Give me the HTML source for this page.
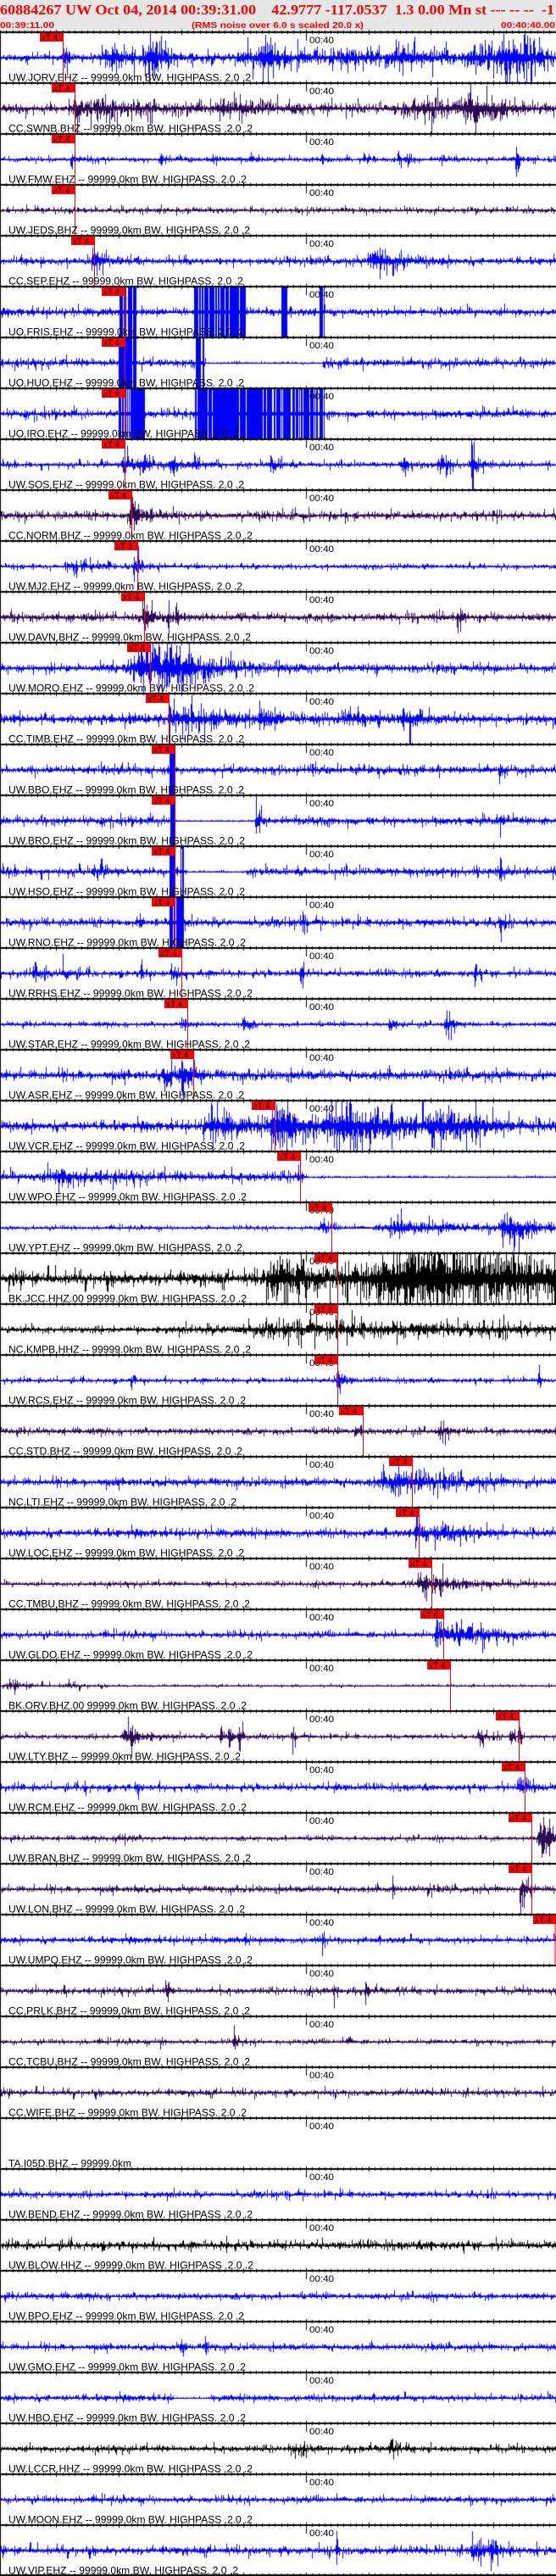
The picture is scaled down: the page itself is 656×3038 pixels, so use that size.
<!DOCTYPE html>
<html><head><meta charset="utf-8">
<style>
html,body{margin:0;padding:0;background:#fff;}
#w{position:relative;width:656px;height:3038px;overflow:hidden;background:#fff;}
canvas,svg{position:absolute;left:0;top:0;}
.l{font-family:"Liberation Sans",sans-serif;font-size:12px;fill:#000;}
.t{font-family:"Liberation Sans",sans-serif;font-size:11px;fill:#000;}
.x{font-family:"Liberation Sans",sans-serif;font-size:10px;fill:#000;}
.r{fill:#ff0000;}
.m{stroke:#ff0000;stroke-width:1;}
</style></head><body>
<div id="w">
<canvas id="c" width="656" height="3038"></canvas>
<svg width="656" height="3038" xmlns="http://www.w3.org/2000/svg">
<text x="0" y="17" textLength="654" lengthAdjust="spacingAndGlyphs" xml:space="preserve" style="white-space:pre;font-family:'Liberation Serif',serif;font-weight:bold;font-size:17px;fill:#ff0000">60884267 UW Oct 04, 2014 00:39:31.00    42.9777 -117.0537  1.3 0.00 Mn st --- -- --  -1</text>
<text x="0" y="33" textLength="64" lengthAdjust="spacingAndGlyphs" style="font-family:'Liberation Sans',sans-serif;font-weight:bold;font-size:10px;fill:#ff0000">00:39:11.00</text>
<text x="226" y="33" textLength="203" lengthAdjust="spacingAndGlyphs" style="font-family:'Liberation Sans',sans-serif;font-weight:bold;font-size:10px;fill:#ff0000">(RMS noise over 6.0 s scaled 20.0 x)</text>
<text x="591" y="33" textLength="64" lengthAdjust="spacingAndGlyphs" style="font-family:'Liberation Sans',sans-serif;font-weight:bold;font-size:10px;fill:#ff0000">00:40:40.00</text>

<g transform="translate(0,38)"><text class="t" x="365" y="13" textLength="29" lengthAdjust="spacingAndGlyphs">00:40</text><line class="m" x1="74.5" y1="0" x2="74.5" y2="60"/><rect class="r" x="47" y="1" width="28" height="10"/><text class="x" x="49" y="9.5">xT 4</text><text class="l" x="10" y="57.5" textLength="286" lengthAdjust="spacingAndGlyphs">UW.JORV.EHZ -- 99999.0km BW. HIGHPASS. 2.0 .2</text></g>
<g transform="translate(0,98)"><text class="t" x="365" y="13" textLength="29" lengthAdjust="spacingAndGlyphs">00:40</text><line class="m" x1="88.5" y1="0" x2="88.5" y2="60"/><rect class="r" x="61" y="1" width="28" height="10"/><text class="x" x="63" y="9.5">xT 4</text><text class="l" x="10" y="57.5" textLength="288" lengthAdjust="spacingAndGlyphs">CC.SWNB.BHZ -- 99999.0km BW. HIGHPASS .2.0 .2</text></g>
<g transform="translate(0,158)"><text class="t" x="365" y="13" textLength="29" lengthAdjust="spacingAndGlyphs">00:40</text><line class="m" x1="88.5" y1="0" x2="88.5" y2="60"/><rect class="r" x="61" y="1" width="28" height="10"/><text class="x" x="63" y="9.5">xT 4</text><text class="l" x="10" y="57.5" textLength="281" lengthAdjust="spacingAndGlyphs">UW.FMW.EHZ -- 99999.0km BW. HIGHPASS. 2.0 .2</text></g>
<g transform="translate(0,218)"><text class="t" x="365" y="13" textLength="29" lengthAdjust="spacingAndGlyphs">00:40</text><line class="m" x1="88.5" y1="0" x2="88.5" y2="60"/><rect class="r" x="61" y="1" width="28" height="10"/><text class="x" x="63" y="9.5">xT 4</text><text class="l" x="10" y="57.5" textLength="285" lengthAdjust="spacingAndGlyphs">UW.JEDS.BHZ -- 99999.0km BW. HIGHPASS. 2.0 .2</text></g>
<g transform="translate(0,278)"><text class="t" x="365" y="13" textLength="29" lengthAdjust="spacingAndGlyphs">00:40</text><line class="m" x1="111.5" y1="0" x2="111.5" y2="60"/><rect class="r" x="84" y="1" width="28" height="10"/><text class="x" x="86" y="9.5">xT 4</text><text class="l" x="10" y="57.5" textLength="277" lengthAdjust="spacingAndGlyphs">CC.SEP.EHZ -- 99999.0km BW. HIGHPASS. 2.0 .2</text></g>
<g transform="translate(0,338)"><text class="t" x="365" y="13" textLength="29" lengthAdjust="spacingAndGlyphs">00:40</text><line class="m" x1="147.5" y1="0" x2="147.5" y2="60"/><rect class="r" x="120" y="1" width="28" height="10"/><text class="x" x="122" y="9.5">xT 4</text><text class="l" x="10" y="57.5" textLength="278" lengthAdjust="spacingAndGlyphs">UO.FRIS.EHZ -- 99999.0km BW. HIGHPASS. 2.0 .2</text></g>
<g transform="translate(0,398)"><text class="t" x="365" y="13" textLength="29" lengthAdjust="spacingAndGlyphs">00:40</text><line class="m" x1="147.5" y1="0" x2="147.5" y2="60"/><rect class="r" x="120" y="1" width="28" height="10"/><text class="x" x="122" y="9.5">xT 4</text><text class="l" x="10" y="57.5" textLength="278" lengthAdjust="spacingAndGlyphs">UO.HUO.EHZ -- 99999.0km BW. HIGHPASS. 2.0 .2</text></g>
<g transform="translate(0,458)"><text class="t" x="365" y="13" textLength="29" lengthAdjust="spacingAndGlyphs">00:40</text><line class="m" x1="147.5" y1="0" x2="147.5" y2="60"/><rect class="r" x="120" y="1" width="28" height="10"/><text class="x" x="122" y="9.5">xT 4</text><text class="l" x="10" y="57.5" textLength="272" lengthAdjust="spacingAndGlyphs">UO.IRO.EHZ -- 99999.0km BW. HIGHPASS. 2.0 .2</text></g>
<g transform="translate(0,518)"><text class="t" x="365" y="13" textLength="29" lengthAdjust="spacingAndGlyphs">00:40</text><line class="m" x1="147.5" y1="0" x2="147.5" y2="60"/><rect class="r" x="120" y="1" width="28" height="10"/><text class="x" x="122" y="9.5">xT 4</text><text class="l" x="10" y="57.5" textLength="278" lengthAdjust="spacingAndGlyphs">UW.SOS.EHZ -- 99999.0km BW. HIGHPASS. 2.0 .2</text></g>
<g transform="translate(0,578)"><text class="t" x="365" y="13" textLength="29" lengthAdjust="spacingAndGlyphs">00:40</text><line class="m" x1="155.5" y1="0" x2="155.5" y2="60"/><rect class="r" x="128" y="1" width="28" height="10"/><text class="x" x="130" y="9.5">xT 4</text><text class="l" x="10" y="57.5" textLength="288" lengthAdjust="spacingAndGlyphs">CC.NORM.BHZ -- 99999.0km BW. HIGHPASS .2.0 .2</text></g>
<g transform="translate(0,638)"><text class="t" x="365" y="13" textLength="29" lengthAdjust="spacingAndGlyphs">00:40</text><line class="m" x1="162.5" y1="0" x2="162.5" y2="60"/><rect class="r" x="135" y="1" width="28" height="10"/><text class="x" x="137" y="9.5">xT 4</text><text class="l" x="10" y="57.5" textLength="276" lengthAdjust="spacingAndGlyphs">UW.MJ2.EHZ -- 99999.0km BW. HIGHPASS. 2.0 .2</text></g>
<g transform="translate(0,698)"><text class="t" x="365" y="13" textLength="29" lengthAdjust="spacingAndGlyphs">00:40</text><line class="m" x1="170.5" y1="0" x2="170.5" y2="60"/><rect class="r" x="143" y="1" width="28" height="10"/><text class="x" x="145" y="9.5">xT 4</text><text class="l" x="10" y="57.5" textLength="286" lengthAdjust="spacingAndGlyphs">UW.DAVN.BHZ -- 99999.0km BW. HIGHPASS. 2.0 .2</text></g>
<g transform="translate(0,758)"><text class="t" x="365" y="13" textLength="29" lengthAdjust="spacingAndGlyphs">00:40</text><line class="m" x1="177.5" y1="0" x2="177.5" y2="60"/><rect class="r" x="150" y="1" width="28" height="10"/><text class="x" x="152" y="9.5">xT 4</text><text class="l" x="10" y="57.5" textLength="290" lengthAdjust="spacingAndGlyphs">UW.MORO.EHZ -- 99999.0km BW. HIGHPASS. 2.0 .2</text></g>
<g transform="translate(0,818)"><text class="t" x="365" y="13" textLength="29" lengthAdjust="spacingAndGlyphs">00:40</text><line class="m" x1="199.5" y1="0" x2="199.5" y2="60"/><rect class="r" x="172" y="1" width="28" height="10"/><text class="x" x="174" y="9.5">xT 4</text><text class="l" x="10" y="57.5" textLength="278" lengthAdjust="spacingAndGlyphs">CC.TIMB.EHZ -- 99999.0km BW. HIGHPASS. 2.0 .2</text></g>
<g transform="translate(0,878)"><text class="t" x="365" y="13" textLength="29" lengthAdjust="spacingAndGlyphs">00:40</text><line class="m" x1="206.5" y1="0" x2="206.5" y2="60"/><rect class="r" x="179" y="1" width="28" height="10"/><text class="x" x="181" y="9.5">xT 4</text><text class="l" x="10" y="57.5" textLength="278" lengthAdjust="spacingAndGlyphs">UW.BBO.EHZ -- 99999.0km BW. HIGHPASS. 2.0 .2</text></g>
<g transform="translate(0,938)"><text class="t" x="365" y="13" textLength="29" lengthAdjust="spacingAndGlyphs">00:40</text><line class="m" x1="206.5" y1="0" x2="206.5" y2="60"/><rect class="r" x="179" y="1" width="28" height="10"/><text class="x" x="181" y="9.5">xT 4</text><text class="l" x="10" y="57.5" textLength="279" lengthAdjust="spacingAndGlyphs">UW.BRO.EHZ -- 99999.0km BW. HIGHPASS. 2.0 .2</text></g>
<g transform="translate(0,998)"><text class="t" x="365" y="13" textLength="29" lengthAdjust="spacingAndGlyphs">00:40</text><line class="m" x1="206.5" y1="0" x2="206.5" y2="60"/><rect class="r" x="179" y="1" width="28" height="10"/><text class="x" x="181" y="9.5">xT 4</text><text class="l" x="10" y="57.5" textLength="279" lengthAdjust="spacingAndGlyphs">UW.HSO.EHZ -- 99999.0km BW. HIGHPASS. 2.0 .2</text></g>
<g transform="translate(0,1058)"><text class="t" x="365" y="13" textLength="29" lengthAdjust="spacingAndGlyphs">00:40</text><line class="m" x1="206.5" y1="0" x2="206.5" y2="60"/><rect class="r" x="179" y="1" width="28" height="10"/><text class="x" x="181" y="9.5">xT 4</text><text class="l" x="10" y="57.5" textLength="280" lengthAdjust="spacingAndGlyphs">UW.RNO.EHZ -- 99999.0km BW. HIGHPASS. 2.0 .2</text></g>
<g transform="translate(0,1118)"><text class="t" x="365" y="13" textLength="29" lengthAdjust="spacingAndGlyphs">00:40</text><line class="m" x1="214.5" y1="0" x2="214.5" y2="60"/><rect class="r" x="187" y="1" width="28" height="10"/><text class="x" x="189" y="9.5">xT 4</text><text class="l" x="10" y="57.5" textLength="288" lengthAdjust="spacingAndGlyphs">UW.RRHS.EHZ -- 99999.0km BW. HIGHPASS .2.0 .2</text></g>
<g transform="translate(0,1178)"><text class="t" x="365" y="13" textLength="29" lengthAdjust="spacingAndGlyphs">00:40</text><line class="m" x1="221.5" y1="0" x2="221.5" y2="60"/><rect class="r" x="194" y="1" width="28" height="10"/><text class="x" x="196" y="9.5">xT 4</text><text class="l" x="10" y="57.5" textLength="285" lengthAdjust="spacingAndGlyphs">UW.STAR.EHZ -- 99999.0km BW. HIGHPASS. 2.0 .2</text></g>
<g transform="translate(0,1238)"><text class="t" x="365" y="13" textLength="29" lengthAdjust="spacingAndGlyphs">00:40</text><line class="m" x1="228.5" y1="0" x2="228.5" y2="60"/><rect class="r" x="201" y="1" width="28" height="10"/><text class="x" x="203" y="9.5">xT 4</text><text class="l" x="10" y="57.5" textLength="278" lengthAdjust="spacingAndGlyphs">UW.ASR.EHZ -- 99999.0km BW. HIGHPASS. 2.0 .2</text></g>
<g transform="translate(0,1298)"><text class="t" x="365" y="13" textLength="29" lengthAdjust="spacingAndGlyphs">00:40</text><line class="m" x1="324.5" y1="0" x2="324.5" y2="60"/><rect class="r" x="297" y="1" width="28" height="10"/><text class="x" x="299" y="9.5">xT 4</text><text class="l" x="10" y="57.5" textLength="279" lengthAdjust="spacingAndGlyphs">UW.VCR.EHZ -- 99999.0km BW. HIGHPASS. 2.0 .2</text></g>
<g transform="translate(0,1358)"><text class="t" x="365" y="13" textLength="29" lengthAdjust="spacingAndGlyphs">00:40</text><line class="m" x1="354.5" y1="0" x2="354.5" y2="60"/><rect class="r" x="327" y="1" width="28" height="10"/><text class="x" x="329" y="9.5">xT 4</text><text class="l" x="10" y="57.5" textLength="281" lengthAdjust="spacingAndGlyphs">UW.WPO.EHZ -- 99999.0km BW. HIGHPASS. 2.0 .2</text></g>
<g transform="translate(0,1418)"><text class="t" x="365" y="13" textLength="29" lengthAdjust="spacingAndGlyphs">00:40</text><line class="m" x1="391.5" y1="0" x2="391.5" y2="60"/><rect class="r" x="364" y="1" width="28" height="10"/><text class="x" x="366" y="9.5">xT 4</text><text class="l" x="10" y="57.5" textLength="276" lengthAdjust="spacingAndGlyphs">UW.YPT.EHZ -- 99999.0km BW. HIGHPASS. 2.0 .2</text></g>
<g transform="translate(0,1478)"><text class="t" x="365" y="13" textLength="29" lengthAdjust="spacingAndGlyphs">00:40</text><line class="m" x1="398.5" y1="0" x2="398.5" y2="60"/><rect class="r" x="371" y="1" width="28" height="10"/><text class="x" x="373" y="9.5">xT 4</text><text class="l" x="10" y="57.5" textLength="281" lengthAdjust="spacingAndGlyphs">BK.JCC.HHZ.00 99999.0km BW. HIGHPASS. 2.0 .2</text></g>
<g transform="translate(0,1538)"><text class="t" x="365" y="13" textLength="29" lengthAdjust="spacingAndGlyphs">00:40</text><line class="m" x1="398.5" y1="0" x2="398.5" y2="60"/><rect class="r" x="371" y="1" width="28" height="10"/><text class="x" x="373" y="9.5">xT 4</text><text class="l" x="10" y="57.5" textLength="286" lengthAdjust="spacingAndGlyphs">NC.KMPB.HHZ -- 99999.0km BW. HIGHPASS. 2.0 .2</text></g>
<g transform="translate(0,1598)"><text class="t" x="365" y="13" textLength="29" lengthAdjust="spacingAndGlyphs">00:40</text><line class="m" x1="398.5" y1="0" x2="398.5" y2="60"/><rect class="r" x="371" y="1" width="28" height="10"/><text class="x" x="373" y="9.5">xT 4</text><text class="l" x="10" y="57.5" textLength="280" lengthAdjust="spacingAndGlyphs">UW.RCS.EHZ -- 99999.0km BW. HIGHPASS. 2.0 .2</text></g>
<g transform="translate(0,1658)"><text class="t" x="365" y="13" textLength="29" lengthAdjust="spacingAndGlyphs">00:40</text><line class="m" x1="428.5" y1="0" x2="428.5" y2="60"/><rect class="r" x="400" y="1" width="28" height="10"/><text class="x" x="402" y="9.5">xT 4</text><text class="l" x="10" y="57.5" textLength="276" lengthAdjust="spacingAndGlyphs">CC.STD.BHZ -- 99999.0km BW. HIGHPASS. 2.0 .2</text></g>
<g transform="translate(0,1718)"><text class="t" x="365" y="13" textLength="29" lengthAdjust="spacingAndGlyphs">00:40</text><line class="m" x1="486.5" y1="0" x2="486.5" y2="60"/><rect class="r" x="459" y="1" width="28" height="10"/><text class="x" x="461" y="9.5">xT 4</text><text class="l" x="10" y="57.5" textLength="269" lengthAdjust="spacingAndGlyphs">NC.LTI.EHZ -- 99999.0km BW. HIGHPASS. 2.0 .2</text></g>
<g transform="translate(0,1778)"><text class="t" x="365" y="13" textLength="29" lengthAdjust="spacingAndGlyphs">00:40</text><line class="m" x1="494.5" y1="0" x2="494.5" y2="60"/><rect class="r" x="467" y="1" width="28" height="10"/><text class="x" x="469" y="9.5">xT 4</text><text class="l" x="10" y="57.5" textLength="278" lengthAdjust="spacingAndGlyphs">UW.LOC.EHZ -- 99999.0km BW. HIGHPASS. 2.0 .2</text></g>
<g transform="translate(0,1838)"><text class="t" x="365" y="13" textLength="29" lengthAdjust="spacingAndGlyphs">00:40</text><line class="m" x1="509.5" y1="0" x2="509.5" y2="60"/><rect class="r" x="482" y="1" width="28" height="10"/><text class="x" x="484" y="9.5">xT 4</text><text class="l" x="10" y="57.5" textLength="285" lengthAdjust="spacingAndGlyphs">CC.TMBU.BHZ -- 99999.0km BW. HIGHPASS. 2.0 .2</text></g>
<g transform="translate(0,1898)"><text class="t" x="365" y="13" textLength="29" lengthAdjust="spacingAndGlyphs">00:40</text><line class="m" x1="523.5" y1="0" x2="523.5" y2="60"/><rect class="r" x="496" y="1" width="28" height="10"/><text class="x" x="498" y="9.5">xT 4</text><text class="l" x="10" y="57.5" textLength="288" lengthAdjust="spacingAndGlyphs">UW.GLDO.EHZ -- 99999.0km BW. HIGHPASS .2.0 .2</text></g>
<g transform="translate(0,1958)"><text class="t" x="365" y="13" textLength="29" lengthAdjust="spacingAndGlyphs">00:40</text><line class="m" x1="531.5" y1="0" x2="531.5" y2="60"/><rect class="r" x="504" y="1" width="28" height="10"/><text class="x" x="506" y="9.5">xT 4</text><text class="l" x="10" y="57.5" textLength="281" lengthAdjust="spacingAndGlyphs">BK.ORV.BHZ.00 99999.0km BW. HIGHPASS. 2.0 .2</text></g>
<g transform="translate(0,2018)"><text class="t" x="365" y="13" textLength="29" lengthAdjust="spacingAndGlyphs">00:40</text><line class="m" x1="612.5" y1="0" x2="612.5" y2="60"/><rect class="r" x="585" y="1" width="28" height="10"/><text class="x" x="587" y="9.5">xT 4</text><text class="l" x="10" y="57.5" textLength="274" lengthAdjust="spacingAndGlyphs">UW.LTY.BHZ -- 99999.0km BW. HIGHPASS. 2.0 .2</text></g>
<g transform="translate(0,2078)"><text class="t" x="365" y="13" textLength="29" lengthAdjust="spacingAndGlyphs">00:40</text><line class="m" x1="619.5" y1="0" x2="619.5" y2="60"/><rect class="r" x="592" y="1" width="28" height="10"/><text class="x" x="594" y="9.5">xT 4</text><text class="l" x="10" y="57.5" textLength="281" lengthAdjust="spacingAndGlyphs">UW.RCM.EHZ -- 99999.0km BW. HIGHPASS. 2.0 .2</text></g>
<g transform="translate(0,2138)"><text class="t" x="365" y="13" textLength="29" lengthAdjust="spacingAndGlyphs">00:40</text><line class="m" x1="627.5" y1="0" x2="627.5" y2="60"/><rect class="r" x="600" y="1" width="28" height="10"/><text class="x" x="602" y="9.5">xT 4</text><text class="l" x="10" y="57.5" textLength="286" lengthAdjust="spacingAndGlyphs">UW.BRAN.BHZ -- 99999.0km BW. HIGHPASS. 2.0 .2</text></g>
<g transform="translate(0,2198)"><text class="t" x="365" y="13" textLength="29" lengthAdjust="spacingAndGlyphs">00:40</text><line class="m" x1="627.5" y1="0" x2="627.5" y2="60"/><rect class="r" x="600" y="1" width="28" height="10"/><text class="x" x="602" y="9.5">xT 4</text><text class="l" x="10" y="57.5" textLength="279" lengthAdjust="spacingAndGlyphs">UW.LON.BHZ -- 99999.0km BW. HIGHPASS. 2.0 .2</text></g>
<g transform="translate(0,2258)"><text class="t" x="365" y="13" textLength="29" lengthAdjust="spacingAndGlyphs">00:40</text><line class="m" x1="655" y1="0" x2="655" y2="60"/><rect class="r" x="629" y="1" width="28" height="10"/><text class="x" x="631" y="9.5">xT 4</text><text class="l" x="10" y="57.5" textLength="288" lengthAdjust="spacingAndGlyphs">UW.UMPQ.EHZ -- 99999.0km BW. HIGHPASS .2.0 .2</text></g>
<g transform="translate(0,2318)"><text class="t" x="365" y="13" textLength="29" lengthAdjust="spacingAndGlyphs">00:40</text><text class="l" x="10" y="57.5" textLength="285" lengthAdjust="spacingAndGlyphs">CC.PRLK.BHZ -- 99999.0km BW. HIGHPASS. 2.0 .2</text></g>
<g transform="translate(0,2378)"><text class="t" x="365" y="13" textLength="29" lengthAdjust="spacingAndGlyphs">00:40</text><text class="l" x="10" y="57.5" textLength="285" lengthAdjust="spacingAndGlyphs">CC.TCBU.BHZ -- 99999.0km BW. HIGHPASS. 2.0 .2</text></g>
<g transform="translate(0,2438)"><text class="t" x="365" y="13" textLength="29" lengthAdjust="spacingAndGlyphs">00:40</text><text class="l" x="10" y="57.5" textLength="281" lengthAdjust="spacingAndGlyphs">CC.WIFE.BHZ -- 99999.0km BW. HIGHPASS. 2.0 .2</text></g>
<g transform="translate(0,2498)"><text class="t" x="365" y="13" textLength="29" lengthAdjust="spacingAndGlyphs">00:40</text><text class="l" x="10" y="57.5" textLength="145" lengthAdjust="spacingAndGlyphs">TA.I05D.BHZ -- 99999.0km</text></g>
<g transform="translate(0,2558)"><text class="t" x="365" y="13" textLength="29" lengthAdjust="spacingAndGlyphs">00:40</text><text class="l" x="10" y="57.5" textLength="288" lengthAdjust="spacingAndGlyphs">UW.BEND.EHZ -- 99999.0km BW. HIGHPASS .2.0 .2</text></g>
<g transform="translate(0,2618)"><text class="t" x="365" y="13" textLength="29" lengthAdjust="spacingAndGlyphs">00:40</text><text class="l" x="10" y="57.5" textLength="289" lengthAdjust="spacingAndGlyphs">UW.BLOW.HHZ -- 99999.0km BW. HIGHPASS .2.0 .2</text></g>
<g transform="translate(0,2678)"><text class="t" x="365" y="13" textLength="29" lengthAdjust="spacingAndGlyphs">00:40</text><text class="l" x="10" y="57.5" textLength="278" lengthAdjust="spacingAndGlyphs">UW.BPO.EHZ -- 99999.0km BW. HIGHPASS. 2.0 .2</text></g>
<g transform="translate(0,2738)"><text class="t" x="365" y="13" textLength="29" lengthAdjust="spacingAndGlyphs">00:40</text><text class="l" x="10" y="57.5" textLength="280" lengthAdjust="spacingAndGlyphs">UW.GMO.EHZ -- 99999.0km BW. HIGHPASS. 2.0 .2</text></g>
<g transform="translate(0,2798)"><text class="t" x="365" y="13" textLength="29" lengthAdjust="spacingAndGlyphs">00:40</text><text class="l" x="10" y="57.5" textLength="280" lengthAdjust="spacingAndGlyphs">UW.HBO.EHZ -- 99999.0km BW. HIGHPASS. 2.0 .2</text></g>
<g transform="translate(0,2858)"><text class="t" x="365" y="13" textLength="29" lengthAdjust="spacingAndGlyphs">00:40</text><text class="l" x="10" y="57.5" textLength="288" lengthAdjust="spacingAndGlyphs">UW.LCCR.HHZ -- 99999.0km BW. HIGHPASS .2.0 .2</text></g>
<g transform="translate(0,2918)"><text class="t" x="365" y="13" textLength="29" lengthAdjust="spacingAndGlyphs">00:40</text><text class="l" x="10" y="57.5" textLength="288" lengthAdjust="spacingAndGlyphs">UW.MOON.EHZ -- 99999.0km BW. HIGHPASS .2.0 .2</text></g>
<g transform="translate(0,2978)"><text class="t" x="365" y="13" textLength="29" lengthAdjust="spacingAndGlyphs">00:40</text><text class="l" x="10" y="57.5" textLength="271" lengthAdjust="spacingAndGlyphs">UW.VIP.EHZ -- 99999.0km BW. HIGHPASS. 2.0 .2</text></g>
</svg>
</div>
<script>
(function(){
var c=document.getElementById('c'),x=c.getContext('2d');
x.fillStyle='#e6e6e6';x.fillRect(0,0,656,37);
var s=12345;function R(){s=(s*1103515245+12345)&0x7fffffff;return s/0x7fffffff;}
var B='#0000ff',U='#2b0b57',K='#000000';
var P=[
[B,5,[[75,30,3],[130,14,40],[175,25,15],[310,28,12],[300,12,60],[410,10,30],[470,13,50],[600,28,35],[560,15,30]]],
[U,6,[[88,25,6],[120,10,60],[265,10,40],[500,12,60],[555,25,25]]],
[B,3,[[85,12,6],[190,9,5],[250,10,5],[296,11,5],[380,8,5],[430,9,5],[470,10,5],[480,8,5],[520,10,5],[609,30,3]]],
[U,3.5,[]],
[B,4.5,[[110,20,8],[445,20,25]]],
[B,5,[],[[140,160],[229,290],[332,338],[377,382]]],
[B,5,[],[[140,160],[231,240]],[[243,380,1.2]]],
[B,5,[],[[140,170],[229,383]]],
[B,3.5,[[147,20,10],[168,16,10],[200,12,10],[228,8,8],[320,14,8],[475,10,8],[520,18,8],[557,30,6]]],
[U,5,[[155,30,12]]],
[B,3,[[100,6,15],[158,18,8],[85,5,20]]],
[U,5,[[170,30,8],[198,30,2],[208,30,2],[540,22,4]]],
[B,5,[[170,30,50],[200,20,30]]],
[B,6,[[199,25,4],[220,14,40],[310,10,20],[410,10,20],[480,12,20]]],
[B,5,[[590,20,2]],[[200,207]]],
[B,5,[[302,20,4],[590,20,2]],[[201,206]],[[208,300,1]]],
[B,5,[[590,30,2],[110,8,10]],[[200,206],[212,216]],[[220,290,1.2]]],
[B,5,[[590,30,2],[165,12,3],[355,14,3]],[[200,216]]],
[B,4,[[42,10,10],[167,18,3],[205,10,8],[355,20,3],[560,18,3],[75,8,10]]],
[B,3,[[215,10,6],[287,12,6],[460,8,6],[527,12,8]]],
[B,6,[[215,28,8],[195,12,15]]],
[B,6,[[250,20,30],[330,30,40],[410,30,60],[520,22,50],[560,30,3]]],
[B,6,[[70,10,40],[352,15,3]],null,[[360,656,1.2]]],
[B,2.5,[[380,8,10],[470,12,60],[600,20,30]]],
[K,8,[[330,30,50],[500,50,200]]],
[K,4,[[390,8,400]]],
[B,3,[[398,25,6],[155,7,5],[635,20,2]]],
[U,4,[[420,10,6],[520,7,10]]],
[B,5,[[470,15,60]]],
[B,5,[[490,28,6],[520,12,40]]],
[U,3,[[505,14,40],[245,7,3]]],
[B,4,[[515,30,5],[540,14,40]]],
[U,1.5,[[15,5,25],[80,3,20]]],
[U,3,[[150,20,15],[260,30,3],[270,30,3],[282,30,3],[345,10,3],[566,14,6],[602,20,3],[612,30,2]]],
[B,4,[[100,10,3],[160,10,3],[395,10,3],[615,18,10]]],
[U,3,[[140,8,10],[640,30,15]]],
[U,4,[[160,8,3],[463,10,3],[615,30,6],[505,8,3]]],
[B,4,[[380,15,2],[288,6,2]]],
[U,4,[[75,15,2],[196,17,3],[393,10,4],[430,12,4]]],
[U,3,[[275,10,5],[410,6,5],[190,6,5]]],
[U,4,[]],
null,
[B,4,[]],
[K,5,[[267,8,3],[508,7,3]]],
[B,4,[]],
[B,4,[[213,12,3],[242,12,3]]],
[B,4,[],null,[[205,248,1]]],
[K,4,[[345,7,10],[460,7,10]]],
[B,4,[]],
[B,5,[[397,30,1],[560,12,20],[580,15,5]]]
];
function inR(a,px){if(!a)return null;for(var i=0;i<a.length;i++)if(px>=a[i][0]&&px<=a[i][1])return a[i];return null;}
for(var k=0;k<50;k++){
 var p=P[k];if(!p)continue;
 var T=38+60*k,cy=T+30;
 x.strokeStyle=p[0];x.lineWidth=1;x.beginPath();
 x.moveTo(1,cy+0.5);x.lineTo(656,cy+0.5);
 for(var px=1;px<656;px++){
  var blk=inR(p[3],px);
  if(blk){ if(R()>0.15){x.moveTo(px+0.5,cy-30);x.lineTo(px+0.5,cy+30);} else {x.moveTo(px+0.5,cy-2);x.lineTo(px+0.5,cy+2);} continue;}
  var e=p[1],f=inR(p[4],px);if(f)e=f[2];
  var ev=p[2];
  for(var i=0;i<ev.length;i++){var cc=ev[i][0],a=ev[i][1],w=ev[i][2],g;
   if(px<cc){var d=(cc-px)/Math.max(1,w*0.3);g=Math.exp(-d*d);}else g=Math.exp(-(px-cc)/w);
   e+=a*g;}
  var r1=Math.min(2,-Math.log(R()+1e-6)*0.32+0.1),r2=Math.min(2,-Math.log(R()+1e-6)*0.32+0.1);
  var y0=Math.max(-30,-e*r1),y1=Math.min(30,e*r2);
  x.moveTo(px+0.5,cy+y0);x.lineTo(px+0.5,cy+y1);
 }
 x.stroke();
}
x.fillStyle='#000';
for(var k=0;k<=50;k++){
 var y=38+60*k;if(y>3037)y=3037;
 x.fillRect(0,y-1,656,2);
 for(var n=-49;n<=40;n++){
  var tx=Math.round(361+n*7.37);if(tx<0||tx>656)continue;
  var maj=(n%10===0);
  var up=maj?3:2,dn=maj?3:2;
  if(n===0)dn=10;
  x.fillRect(tx,y-up,1,up+dn);
 }
}
x.fillRect(0,37,1,3001);
})();
</script>
</body></html>
